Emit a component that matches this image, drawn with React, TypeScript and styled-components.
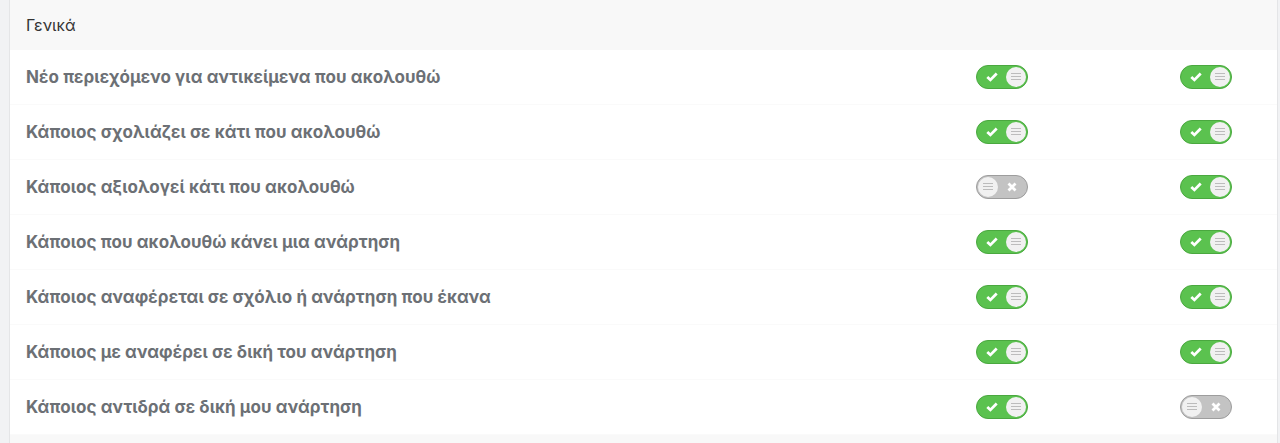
import styled, { createGlobalStyle } from "styled-components"

const GlobalStyle = createGlobalStyle`
  html, body {
    margin: 0;
    padding: 0;
    background: #f1f2f4;
    font-family: Inter, Roboto, "Noto Sans", "Liberation Sans", sans-serif;
  }
`

interface Setting {
  label: string
  first: boolean
  second: boolean
}

const settings: Setting[] = [
  { label: "Νέο περιεχόμενο για αντικείμενα που ακολουθώ", first: true, second: true },
  { label: "Κάποιος σχολιάζει σε κάτι που ακολουθώ", first: true, second: true },
  { label: "Κάποιος αξιολογεί κάτι που ακολουθώ", first: false, second: true },
  { label: "Κάποιος που ακολουθώ κάνει μια ανάρτηση", first: true, second: true },
  { label: "Κάποιος αναφέρεται σε σχόλιο ή ανάρτηση που έκανα", first: true, second: true },
  { label: "Κάποιος με αναφέρει σε δική του ανάρτηση", first: true, second: true },
  { label: "Κάποιος αντιδρά σε δική μου ανάρτηση", first: true, second: false },
]

function Toggle({ on }: { on: boolean }) {
  return (
    <Switch $on={on}>
      {on ? (
        <>
          <Mark>
            <svg width="12" height="10" viewBox="0 0 12 10">
              <path d="M1.3 5 L4.4 7.9 L10.7 1.6" fill="none" stroke="#fff" strokeWidth="2.8" />
            </svg>
          </Mark>
          <Knob />
        </>
      ) : (
        <>
          <Knob />
          <Mark>
            <svg width="10" height="10" viewBox="0 0 10 10">
              <path d="M1.5 1.5 L8.5 8.5 M8.5 1.5 L1.5 8.5" stroke="#fff" strokeWidth="2.8" />
            </svg>
          </Mark>
        </>
      )}
    </Switch>
  )
}

export default function App() {
  return (
    <>
      <GlobalStyle />
      <Page>
        <Panel>
          <Header>Γενικά</Header>
          {settings.map((s) => (
            <Row key={s.label}>
              <Label>{s.label}</Label>
              <Cell>
                <Toggle on={s.first} />
              </Cell>
              <Cell>
                <Toggle on={s.second} />
              </Cell>
            </Row>
          ))}
          <Footer />
        </Panel>
      </Page>
    </>
  )
}

const Page = styled.div`
  width: 1280px;
  height: 443px;
  padding-left: 9px;
  box-sizing: border-box;
  overflow: hidden;
`

const Panel = styled.div`
  width: 1269px;
  background: #fff;
  border-left: 1px solid #e4e5e7;
  border-right: 1px solid #e4e5e7;
  box-sizing: border-box;
`

const Header = styled.div`
  height: 50px;
  background: #f8f8f8;
  display: flex;
  align-items: center;
  padding-left: 16px;
  font-size: 16px;
  color: #333;
`

const Row = styled.div`
  height: 55px;
  display: grid;
  grid-template-columns: 1fr 52px 52px;
  column-gap: 152px;
  padding: 0 45px 0 16px;
  align-items: center;
  border-bottom: 1px solid #fafafa;
  box-sizing: border-box;
`

const Label = styled.div`
  font-size: 17px;
  font-weight: 700;
  letter-spacing: 0.07px;
  color: #6c7075;
`

const Cell = styled.div`
  display: flex;
  align-items: center;
`

const Switch = styled.div<{ $on: boolean }>`
  width: 52px;
  height: 24px;
  box-sizing: border-box;
  border-radius: 12px;
  display: flex;
  align-items: center;
  justify-content: space-between;
  padding: 0 1px;
  background: ${(p) => (p.$on ? "#5bc24f" : "#c3c3c3")};
  border: 1px solid ${(p) => (p.$on ? "#4aa83f" : "#9d9d9d")};
`

const Mark = styled.div`
  width: 28px;
  display: flex;
  align-items: center;
  justify-content: center;
`

const Knob = styled.div`
  width: 20px;
  height: 20px;
  border-radius: 50%;
  background: #f1f1f1 linear-gradient(#bcbcbc, #bcbcbc) no-repeat center 6px / 10px 1px;
  position: relative;
  &::before,
  &::after {
    content: "";
    position: absolute;
    left: 5px;
    width: 10px;
    height: 1px;
    background: #bcbcbc;
  }
  &::before {
    top: 9px;
  }
  &::after {
    top: 12px;
  }
`

const Footer = styled.div`
  height: 10px;
  background: #f8f8f8;
`
